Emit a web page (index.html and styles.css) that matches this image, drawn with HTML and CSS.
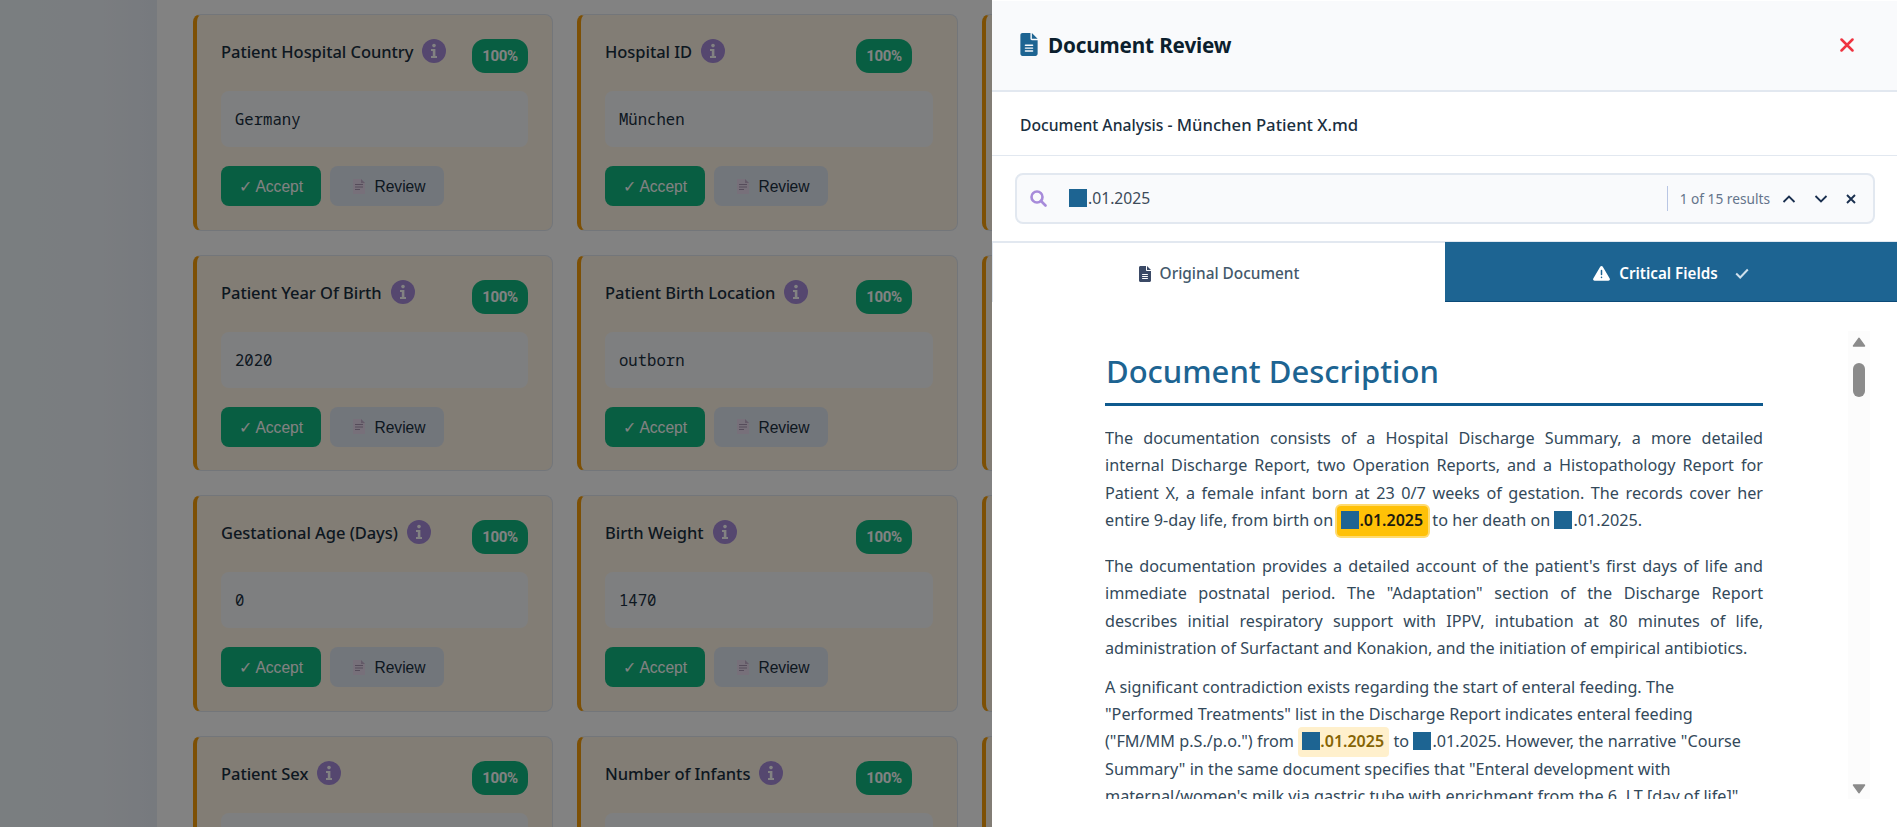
FILE: index.html
```html
<!DOCTYPE html>
<html lang="en">
<head>
<meta charset="utf-8">
<title>Document Review</title>
<link rel="stylesheet" href="styles.css">
</head>
<body>
<svg class="defs" width="0" height="0">
  <symbol id="file" viewBox="0 0 384 512"><path fill="currentColor" d="M48 0C21 0 0 21 0 48v416c0 27 21 48 48 48h288c27 0 48-21 48-48V160H256c-18 0-32-14-32-32V0zm208 0v128h128zM112 256h160a16 16 0 0 1 0 32H112a16 16 0 0 1 0-32m0 64h160a16 16 0 0 1 0 32H112a16 16 0 0 1 0-32m0 64h160a16 16 0 0 1 0 32H112a16 16 0 0 1 0-32"/></symbol>
  <symbol id="info" viewBox="0 0 24 24"><circle cx="12" cy="12" r="12" fill="#a78bda"/><circle cx="12" cy="6.6" r="1.8" fill="#fff"/><path fill="#fff" d="M9 10h4.400v7H15v2H9v-2h1.800v-5H9z"/></symbol>
  <symbol id="page" viewBox="0 0 12 15"><path fill="#eadcf0" d="M0 0h8v4h4v11H0z"/><path fill="#c4b0cd" d="M8 0l4 4H8z"/><path stroke="#a795b0" d="M2 5.500h8M2 8h8M2 10.500h5"/></symbol>
</svg>
<div class="app">
  <aside class="sidebar"></aside>
  <main class="cards">
    <section class="card"><header><h3>Patient Hospital Country</h3><svg class="info"><use href="#info"/></svg><b class="badge">100%</b></header><div class="value">Germany</div><footer><button class="accept">✓ Accept</button><button class="review"><svg><use href="#page"/></svg>Review</button></footer></section>
    <section class="card"><header><h3>Hospital ID</h3><svg class="info"><use href="#info"/></svg><b class="badge">100%</b></header><div class="value">München</div><footer><button class="accept">✓ Accept</button><button class="review"><svg><use href="#page"/></svg>Review</button></footer></section>
    <section class="card"></section>
    <section class="card"><header><h3>Patient Year Of Birth</h3><svg class="info"><use href="#info"/></svg><b class="badge">100%</b></header><div class="value">2020</div><footer><button class="accept">✓ Accept</button><button class="review"><svg><use href="#page"/></svg>Review</button></footer></section>
    <section class="card"><header><h3>Patient Birth Location</h3><svg class="info"><use href="#info"/></svg><b class="badge">100%</b></header><div class="value">outborn</div><footer><button class="accept">✓ Accept</button><button class="review"><svg><use href="#page"/></svg>Review</button></footer></section>
    <section class="card"></section>
    <section class="card"><header><h3>Gestational Age (Days)</h3><svg class="info"><use href="#info"/></svg><b class="badge">100%</b></header><div class="value">0</div><footer><button class="accept">✓ Accept</button><button class="review"><svg><use href="#page"/></svg>Review</button></footer></section>
    <section class="card"><header><h3>Birth Weight</h3><svg class="info"><use href="#info"/></svg><b class="badge">100%</b></header><div class="value">1470</div><footer><button class="accept">✓ Accept</button><button class="review"><svg><use href="#page"/></svg>Review</button></footer></section>
    <section class="card"></section>
    <section class="card"><header><h3>Patient Sex</h3><svg class="info"><use href="#info"/></svg><b class="badge">100%</b></header><div class="value"></div></section>
    <section class="card"><header><h3>Number of Infants</h3><svg class="info"><use href="#info"/></svg><b class="badge">100%</b></header><div class="value"></div></section>
    <section class="card"></section>
  </main>
</div>
<div class="overlay"></div>
<aside class="drawer">
  <header class="drawer-head">
    <svg class="file-lg"><use href="#file"/></svg>
    <h1>Document Review</h1>
    <svg class="close" viewBox="0 0 14 14"><path d="M1.500 1.500l11 11M12.500 1.500l-11 11"/></svg>
  </header>
  <div class="doc-name"><span class="doc-kind">Document Analysis - </span><span class="doc-file">München Patient X.md</span></div>
  <div class="search-wrap">
    <div class="search">
      <svg class="lens" viewBox="0 0 17 17"><circle cx="7" cy="7" r="5.500"/><path d="M11 11l4.500 4.500"/></svg>
      <span class="query"><i class="mask"></i>.01.2025</span>
      <span class="count">1 of 15 results</span>
      <svg class="chev" viewBox="0 0 14 10"><path d="M1.500 8L7 2.500 12.500 8"/></svg>
      <svg class="chev down" viewBox="0 0 14 10"><path d="M1.500 2L7 7.500 12.500 2"/></svg>
      <svg class="clear" viewBox="0 0 10 10"><path d="M1 1l8 8M9 1L1 9"/></svg>
    </div>
  </div>
  <nav class="tabs">
    <div class="tab"><svg class="file-sm"><use href="#file"/></svg><span class="tab-original">Original Document</span></div>
    <div class="tab active"><svg class="warn" viewBox="0 0 17 15"><path fill="#fff" d="M8.500 0c.6 0 1 .3 1.300.8l6.900 11.800c.6 1-.1 2.200-1.300 2.200H1.600C.4 14.800-.3 13.600.3 12.600L7.200.8C7.500.3 7.900 0 8.500 0z"/><path stroke="#1d6492" stroke-width="1.500" stroke-linecap="round" d="M8.500 4.500v4M8.500 11.300v.3"/></svg><span class="tab-critical">Critical Fields</span><svg class="tick" viewBox="0 0 14 11"><path d="M1.200 5.500l4 4L12.800 1.500"/></svg></div>
  </nav>
  <div class="viewer">
    <article class="doc">
      <h2><span>Document Description</span></h2>
      <p>
        <span class="line">The documentation consists of a Hospital Discharge Summary, a more detailed</span>
        <span class="line">internal Discharge Report, two Operation Reports, and a Histopathology Report for</span>
        <span class="line">Patient X, a female infant born at 23 0/7 weeks of gestation. The records cover her</span>
        <span class="line" style="width:535px">entire 9-day life, from birth on <mark class="current"><i class="mask"></i>.01.2025</mark> to her death on <i class="mask"></i>.01.2025.</span>
      </p>
      <p>
        <span class="line">The documentation provides a detailed account of the patient's first days of life and</span>
        <span class="line">immediate postnatal period. The "Adaptation" section of the Discharge Report</span>
        <span class="line">describes initial respiratory support with IPPV, intubation at 80 minutes of life,</span>
        <span class="line" style="width:639px">administration of Surfactant and Konakion, and the initiation of empirical antibiotics.</span>
      </p>
      <p class="finding">
        <span class="line" style="width:567px">A significant contradiction exists regarding the start of enteral feeding. The</span>
        <span class="line" style="width:582px">"Performed Treatments" list in the Discharge Report indicates enteral feeding</span>
        <span class="line" style="width:636px">("FM/MM p.S./p.o.") from <mark><i class="mask"></i>.01.2025</mark> to <i class="mask"></i>.01.2025. However, the narrative "Course</span>
        <span class="line" style="width:562px">Summary" in the same document specifies that "Enteral development with</span>
        <span class="line" style="width:630px">maternal/women's milk via gastric tube with enrichment from the 6. LT [day of life]"</span>
      </p>
    </article>
    <div class="scrollbar">
      <svg viewBox="0 0 14 10"><path d="M7 1.200L12.600 9H1.400z"/></svg>
      <div class="thumb"></div>
      <svg class="end" viewBox="0 0 14 10"><path d="M7 8.800L1.400 1h11.200z"/></svg>
    </div>
  </div>
</aside>
</body>
</html>
```

FILE: styles.css
```css
* { box-sizing: border-box; }
body { margin: 0; height: 827px; overflow: hidden; background: #fff; font-family: "Noto Sans", "Open Sans", sans-serif; color: #1a2f3f; }
.defs { position: absolute; }
h1, h2, h3, p { margin: 0; }
svg { flex: none; display: block; fill: none; }

.app { display: grid; grid-template-columns: 157px 1fr; height: 827px; overflow: hidden; }
.sidebar { background: linear-gradient(90deg, #eff8fc, #f0f5fb 65%, #e9eff8); }
.cards { display: grid; grid-template-columns: 360px 381px 381px; grid-auto-rows: 216.700px; gap: 24px; padding: 14px 0 0 36px; height: 827px; overflow: hidden; align-content: start; }
.card { border: 1px solid #e2e8f0; border-left: 4px solid #f59e0b; border-radius: 8px; background: #fff5e6; padding: 24px 24px 0; }
.card header { display: flex; align-items: flex-start; height: 34px; width: 307px; margin-bottom: 18px; }
.card h3 { font-size: 16.500px; line-height: 24px; font-weight: 500; letter-spacing: -.050px; padding-top: 1px; margin-right: 9px; white-space: nowrap; }
.info { width: 24px; height: 24px; }
.badge { margin-left: auto; width: 56px; height: 34px; border-radius: 13px; background: #10b981; color: #fff; font: bold 15px/35px "Roboto", sans-serif; letter-spacing: -.3px; text-align: center; }
.value { height: 56px; border-radius: 8px; background: #f8fafc; font: 15.600px/57px "Noto Sans Mono", "DejaVu Sans Mono", monospace; padding-left: 14px; }
.card footer { display: flex; gap: 9px; margin-top: 19px; }
button { border: 0; height: 40px; border-radius: 8px; padding: 2px 0 0; font: 15.600px "Liberation Sans", Arial, sans-serif; display: flex; align-items: center; justify-content: center; color: #1a2f3f; }
.accept { width: 100px; background: #10b981; color: #fff; }
.review { width: 114px; background: #e0e7f2; padding-left: 5px; }
.review svg { width: 12px; height: 15px; margin: -2px 9px 0 0; }

.overlay { position: fixed; inset: 0; background: rgba(0, 0, 0, .49); }

.drawer { position: fixed; top: 0; right: 0; width: 905px; height: 827px; background: #fff; display: flex; flex-direction: column; }
.drawer-head { height: 92px; flex: none; background: #f9fafc; border-bottom: 2px solid #e2e8f0; border-top: 1px solid #fff; display: flex; align-items: center; padding: 0 43px 2px 28px; }
.file-lg { width: 18px; height: 23px; color: #1d6492; margin-right: 10px; }
.drawer h1 { font-size: 20.700px; font-weight: 700; color: #0c1f2e; letter-spacing: -.15px; flex: 1; }
.close { width: 14px; height: 14px; stroke: #ef3340; stroke-width: 2.500; stroke-linecap: round; }
.doc-name { height: 64px; flex: none; border-bottom: 1px solid #e2e8f0; padding-left: 28px; line-height: 66px; font-size: 15.700px; white-space: pre; }
.doc-kind { font-weight: 500; }
.doc-file { font-weight: 500; font-size: 16.700px; }
.search-wrap { height: 87px; flex: none; padding: 17px 22px 0 23px; border-bottom: 2px solid #e2e8f0; }
.search { height: 51px; border: 2px solid #e2e8f0; border-radius: 8px; background: #f9fafc; display: flex; align-items: center; padding: 0 17px 0 13px; }
.lens { width: 17px; height: 17px; stroke: #a78bda; stroke-width: 2.600; stroke-linecap: round; margin-right: 22px; }
.query { flex: 1; font-size: 15.700px; color: #3d4b59; padding-bottom: 2px; }
.mask { display: inline-block; width: 18px; height: 18px; background: #1d6492; vertical-align: -3px; margin-right: 1px; }
.count { font-size: 13.700px; line-height: 25px; color: #64748b; border-left: 1px solid #b9c6e4; padding-left: 12px; margin-right: 12px; }
.chev { width: 14px; height: 10px; stroke: #1a2f4f; stroke-width: 1.800; margin-right: 18px; }
.clear { width: 10px; height: 10px; stroke: #1a2f4f; stroke-width: 1.900; }
.tabs { display: flex; height: 60px; flex: none; margin-top: -1px; }
.tab { flex: 1; display: flex; align-items: center; justify-content: center; font-size: 15.400px; font-weight: 500; color: #44596b; border-left: 1px solid #dfe6ef; padding-top: 3px; }
.tab.active { background: #1d6492; color: #fff; font-weight: 600; font-size: 15.200px; border-left: 0; border-bottom: 1px solid #0b4a78; }
.file-sm { width: 12px; height: 16px; color: #3b4a66; margin-right: 9px; }
.warn { width: 17px; height: 15px; margin-right: 9px; }
.tick { width: 14px; height: 11px; margin-left: 17px; stroke: #cfe0ec; stroke-width: 2; }
.viewer { display: flex; justify-content: space-between; margin: 29px 27px 0 113px; height: 468px; overflow: hidden; }
.doc { width: 658px; color: #33495a; font-size: 16.200px; line-height: 27.450px; padding-top: 17px; }
.doc h2 { height: 58px; border-bottom: 3px solid #0f5a8e; color: #1d6492; font-size: 31px; line-height: 46px; font-weight: 500; margin-bottom: 19px; padding-left: 1px; }
.doc p { margin-bottom: 18px; }
.doc p + p { margin-bottom: 11px; }
.line { display: block; height: 27.450px; white-space: nowrap; text-align-last: justify; }
.doc mark { display: inline-block; height: 30px; line-height: 29px; margin: -2px 0; padding: 0 5px 0 4px; border-radius: 4px; background: #fff0cc; color: #856404; font-weight: 600; font-size: 16px; text-align-last: left; }
.doc mark.current { background: #ffc107; color: #1c1a10; box-shadow: 0 0 0 2px #ffdb70; }
.doc mark .mask { margin-right: 0; }
.scrollbar { width: 22px; height: 468px; background: #fcfcfc; display: flex; flex-direction: column; align-items: center; padding: 6px 0 5px; }
.scrollbar svg { width: 14px; height: 10px; fill: #8b8b8b; stroke: #8b8b8b; stroke-width: 1.300; stroke-linejoin: round; }
.scrollbar .end { margin-top: auto; }
.thumb { width: 12px; height: 34px; border-radius: 6px; background: #8b8b8b; margin-top: 16px; }
```
